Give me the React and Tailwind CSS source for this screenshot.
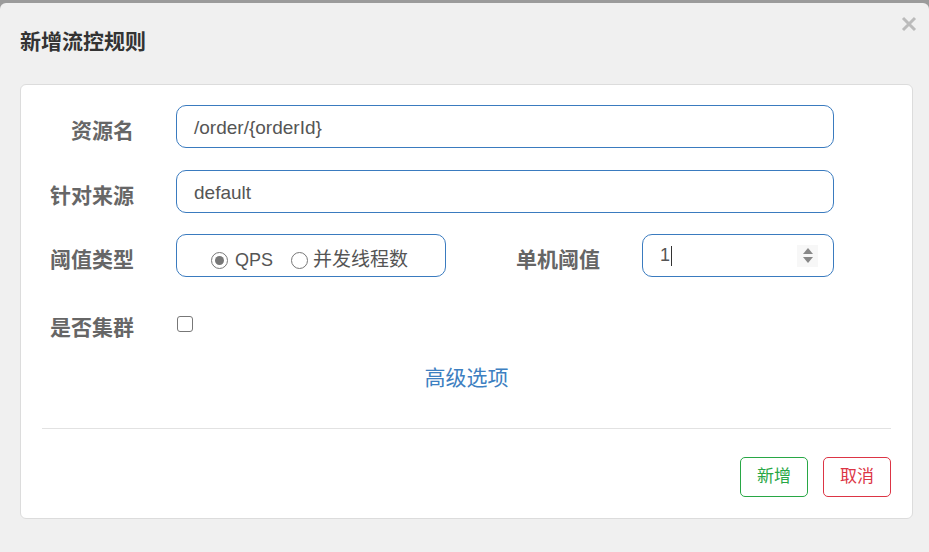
const font = { fontFamily: '"Liberation Sans", "Noto Sans CJK SC", sans-serif' };

function Label({ children, className = '' }) {
  return (
    <label className={`text-right text-[21px] font-bold text-[#666] pt-[8px] ${className}`}>{children}</label>
  );
}

export default function App() {
  return (
    <div style={font} className="w-[929px] h-[552px] bg-[#9b9b9b] pt-[3px] overflow-hidden">
      <div className="relative h-[549px] bg-[#f0f0f0] rounded-t-[6px]">
        {/* header */}
        <div className="h-[81px] pl-[20px] pt-[24px]">
          <h1 className="text-[21px] font-bold text-[#333] leading-[30px]">新增流控规则</h1>
        </div>
        <button className="absolute right-[12px] top-[13px] w-[16px] h-[16px]">
          <svg viewBox="0 0 16 16" className="w-[16px] h-[16px]">
            <path d="M2 2 L14 14 M14 2 L2 14" stroke="#bbb" strokeWidth="3" />
          </svg>
        </button>

        {/* form card */}
        <div className="ml-[20px] w-[893px] h-[435px] bg-white border border-[#dcdcdc] rounded-[6px] pt-[20px]">
          <div className="flex items-center h-[43px]">
            <Label className="w-[113px]">资源名</Label>
            <div className="ml-[42px] w-[658px] h-[43px] border border-[#3a7bbf] rounded-[10px] flex items-center pl-[17px] pt-[3px] text-[19px] text-[#555]">
              /order/{'{'}orderId{'}'}
            </div>
          </div>

          <div className="flex items-center h-[43px] mt-[22px]">
            <Label className="w-[113px]">针对来源</Label>
            <div className="ml-[42px] w-[658px] h-[43px] border border-[#3a7bbf] rounded-[10px] flex items-center pl-[17px] pt-[3px] text-[19px] text-[#555]">
              default
            </div>
          </div>

          <div className="flex items-center h-[43px] mt-[21px]">
            <Label className="w-[113px]">阈值类型</Label>
            <div className="ml-[42px] w-[270px] h-[43px] border border-[#3a7bbf] rounded-[10px] flex items-center pl-[34px] pt-[9px] text-[18px] text-[#555]">
              <span className="w-[17px] h-[17px] rounded-full border border-[#777] flex items-center justify-center">
                <span className="w-[9px] h-[9px] rounded-full bg-[#777]" />
              </span>
              <span className="ml-[7px]">QPS</span>
              <span className="ml-[18px] w-[17px] h-[17px] rounded-full border border-[#777]" />
              <span className="ml-[5px] text-[19px]">并发线程数</span>
            </div>
            <Label className="w-[154px]">单机阈值</Label>
            <div className="ml-[42px] w-[192px] h-[43px] border border-[#3a7bbf] rounded-[10px] flex items-center pl-[17px] pr-[15px] text-[18px] text-[#555]">
              <span>1</span>
              <span className="w-px h-[20px] bg-[#333] ml-[1px]" />
              <span className="ml-auto w-[21px] h-[22px] bg-[#f7f7f7] flex flex-col items-center justify-center gap-[3px]">
                <svg viewBox="0 0 10 6" className="w-[10px] h-[6px]"><path d="M0 6 L5 0 L10 6 Z" fill="#888" /></svg>
                <svg viewBox="0 0 10 6" className="w-[10px] h-[6px]"><path d="M0 0 L10 0 L5 6 Z" fill="#888" /></svg>
              </span>
            </div>
          </div>

          <div className="flex items-center h-[43px] mt-[25px]">
            <Label className="w-[113px] pt-[4px]">是否集群</Label>
            <span className="ml-[43px] w-[16px] h-[16px] border border-[#777] rounded-[3px]" />
          </div>

          <div className="text-center mt-[18px] h-[30px] leading-[30px]">
            <a className="text-[21px] text-[#3d7fc1]">高级选项</a>
          </div>

          <div className="mx-[21px] mt-[35px] h-px bg-[#e2e2e2]" />

          <div className="flex justify-end gap-[15px] mr-[21px] mt-[28px]">
            <button className="w-[68px] h-[40px] border border-[#28a745] rounded-[5px] text-[17px] text-[#28a745]">新增</button>
            <button className="w-[68px] h-[40px] border border-[#dc3545] rounded-[5px] text-[17px] text-[#dc3545]">取消</button>
          </div>
        </div>
      </div>
    </div>
  );
}
